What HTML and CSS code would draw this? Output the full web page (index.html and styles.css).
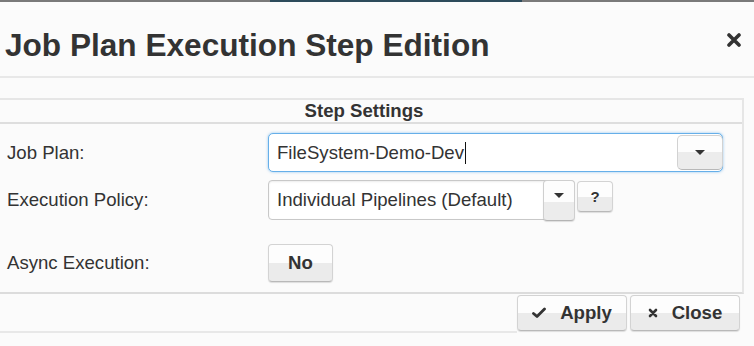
FILE: index.html
```html
<!DOCTYPE html>
<html lang="en">
<head>
<meta charset="utf-8">
<title>Job Plan Execution Step Edition</title>
<link rel="stylesheet" href="styles.css">
</head>
<body>
<div class="topbar"><div class="topbar-tab"></div></div>

<div class="dialog">
  <div class="dialog-header">
    <h1 class="dialog-title">Job Plan Execution Step Edition</h1>
    <span class="dialog-close">
      <svg width="14" height="14" viewBox="0 0 14 14"><path d="M2 2L12 12M12 2L2 12" stroke="#333" stroke-width="3.6" stroke-linecap="round"/></svg>
    </span>
  </div>

  <div class="dialog-body">
    <div class="settings">
      <div class="settings-head">Step Settings</div>

      <div class="settings-row row-plan">
        <label class="settings-label">Job Plan:</label>
        <div class="combo combo-focus">
          <span class="combo-text">FileSystem-Demo-Dev<span class="caret"></span></span>
          <span class="combo-btn"><i class="tri"></i></span>
        </div>
      </div>

      <div class="settings-row row-policy">
        <label class="settings-label">Execution Policy:</label>
        <div class="field-line">
          <div class="select">
            <span class="select-text">Individual Pipelines (Default)</span>
            <span class="select-btn"><i class="tri"></i></span>
          </div>
          <button class="btn btn-help">?</button>
        </div>
      </div>

      <div class="settings-row row-async">
        <label class="settings-label">Async Execution:</label>
        <div><button class="btn btn-toggle">No</button></div>
      </div>
    </div>
  </div>

  <div class="dialog-footer">
    <span class="footer-line"></span>
    <button class="btn btn-action">
      <svg width="14" height="12" viewBox="0 0 14 12"><path d="M1.5 6.5L5 9.5L12.5 2" fill="none" stroke="#333" stroke-width="2.8" stroke-linecap="round" stroke-linejoin="round"/></svg>
      Apply
    </button>
    <button class="btn btn-action btn-close">
      <svg width="10" height="10" viewBox="0 0 10 10"><path d="M2 2L8 8M8 2L2 8" stroke="#333" stroke-width="2.6" stroke-linecap="round"/></svg>
      Close
    </button>
  </div>
</div>
</body>
</html>
```

FILE: styles.css
```css
body { margin: 0; background: #fbfbfb; font-family: "Liberation Sans", Arial, Helvetica, sans-serif; color: #333; }

.topbar { height: 2px; background: #7a7a7a; }
.topbar-tab { margin-left: 270px; width: 252px; height: 2px; background: #2d4b5b; }

.dialog-header { display: flex; justify-content: space-between; align-items: flex-start; padding: 25px 13px 13px 5px; border-bottom: 2px solid #e8e8e8; }
.dialog-title { margin: 0; font-size: 31.6px; line-height: 36px; font-weight: bold; color: #333; }
.dialog-close { margin-top: 6px; display: flex; }

.dialog-body { padding-top: 20px; }

.settings { margin: 0 10px 0 -16px; border: 2px solid #e6e6e6; border-bottom-color: #dcdcdc; }
.settings-head { height: 22px; line-height: 22px; text-align: center; font-size: 18.6px; font-weight: bold; border-bottom: 2px solid #dedede; }
.settings-row { display: grid; grid-template-columns: 282px 1fr; align-items: center; font-size: 18.6px; }
.settings-label { padding-left: 21px; }
.row-plan { padding-top: 9px; }
.row-policy { padding-top: 8px; }
.row-async { padding-top: 24px; padding-bottom: 10px; }

.tri { display: block; width: 0; height: 0; border-left: 5px solid transparent; border-right: 5px solid transparent; border-top: 5px solid #333; }

.combo { display: flex; width: 455px; height: 39px; box-sizing: border-box; border: 1px solid #66afe9; border-radius: 5px; background: #fff; box-shadow: 0 0 3px rgba(102, 175, 233, .7); }
.combo-text { flex: 1; display: flex; align-items: center; padding-left: 8px; }
.caret { display: inline-block; width: 0; height: 22px; border-left: 1px solid #111; margin-left: 1px; }
.combo-btn { width: 44px; margin: 1px -1px 1px 0; display: flex; align-items: center; justify-content: center; border: 1px solid #d2d2d2; border-bottom-color: #b8b8b8; border-radius: 5px; background: linear-gradient(to bottom, #fdfdfd 50%, #ececec 50%); }

.field-line { display: flex; align-items: flex-start; }
.select { display: flex; width: 307px; height: 40px; box-sizing: border-box; border: 1px solid #c8c8c8; border-radius: 4px; background: #fff; box-shadow: inset 0 1px 2px rgba(0, 0, 0, .08); }
.select-text { flex: 1; display: flex; align-items: center; padding-left: 8px; }
.select-btn { width: 32px; height: 41px; margin: -1px -1px 0 0; box-sizing: border-box; display: flex; align-items: center; justify-content: center; padding-bottom: 10px; border: 1px solid #cfcfcf; border-bottom-color: #b4b4b4; border-radius: 4px; background: linear-gradient(to bottom, #fdfdfd 55%, #ececec 55%); box-shadow: 0 1px 1px rgba(0, 0, 0, .12); }

.btn { font-family: inherit; font-weight: bold; color: #333; border: 1px solid #d3d3d3; border-bottom-color: #b9b9b9; border-radius: 4px; background: linear-gradient(to bottom, #fdfdfd 50%, #ebebeb 50%); box-shadow: 0 1px 1px rgba(0, 0, 0, .12); padding: 0; }
.btn-help { margin: 1px 0 0 2px; width: 36px; height: 31px; font-size: 15px; }
.btn-toggle { width: 65px; height: 38px; font-size: 18.6px; }

.dialog-footer { display: flex; padding-top: 1px; padding-right: 14px; }
.footer-line { flex: 1; border-bottom: 2px solid #e8e8e8; }
.btn-action { display: flex; align-items: center; justify-content: center; gap: 14px; width: 110px; height: 36px; margin-bottom: 2px; font-size: 18.6px; }
.btn-action svg { display: block; }
.btn-close { margin-left: 3px; }
```
